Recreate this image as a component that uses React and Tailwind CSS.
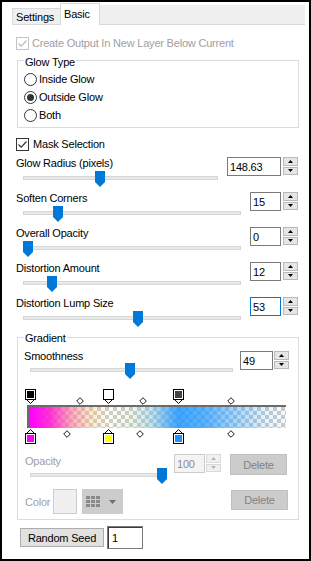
import React from 'react';

const FONT = "font-['Liberation_Sans',Arial,sans-serif] text-[11px] leading-[14px] tracking-[-0.2px]";

function Check({ disabled }) {
  const c = disabled ? '#bcbcbc' : '#333333';
  return (
    <span className={`w-[13px] h-[13px] border bg-white flex items-center justify-center ${disabled ? 'border-[#c4c4c4]' : 'border-[#333333]'}`}>
      <svg width="11" height="11" viewBox="0 0 11 11">
        <path d="M1.5 5.5 L4.2 8.2 L9.5 2.5" fill="none" stroke={c} strokeWidth="1.2" />
      </svg>
    </span>
  );
}

function Radio({ on, label }) {
  return (
    <div className="h-[18px] flex items-center gap-[2px]">
      <span className="w-[13px] h-[13px] rounded-full border border-[#333333] bg-white flex items-center justify-center">
        {on && <span className="w-[7px] h-[7px] rounded-full bg-[#333333]" />}
      </span>
      <span>{label}</span>
    </div>
  );
}

function Arrows({ disabled }) {
  const c = disabled ? '#b4b4b4' : '#000000';
  const box = disabled ? 'border-[#dadada] bg-[#f0f0f0]' : 'border-[#b9b9b9] bg-[#e6e6e6]';
  return (
    <div className="flex flex-col w-[15px] h-[18px] gap-[1px]">
      <div className={`flex-1 border flex items-center justify-center ${box}`}>
        <svg width="5" height="3" viewBox="0 0 5 3"><path d="M0 3 L2.5 0 L5 3 Z" fill={c} /></svg>
      </div>
      <div className={`flex-1 border flex items-center justify-center ${box}`}>
        <svg width="5" height="3" viewBox="0 0 5 3"><path d="M0 0 L5 0 L2.5 3 Z" fill={c} /></svg>
      </div>
    </div>
  );
}

function Spin({ value, w, gap, focus, disabled }) {
  let box = 'border-[#7a7a7a] bg-white';
  if (focus) box = 'border-[#0078d7] bg-white';
  if (disabled) box = 'border-[#cccccc] bg-[#f4f4f4] text-[#8d8d8d]';
  return (
    <div className="flex items-start">
      <div className={`${w} h-[19px] border pl-[2px] flex items-center ${box}`}>{value}</div>
      <div className={gap}><Arrows disabled={disabled} /></div>
    </div>
  );
}

function Slider({ w, left }) {
  return (
    <div className={`relative h-[16px] ${w}`}>
      <div className="absolute left-0 right-0 top-[5px] h-[4px] bg-[#e7eaea] border border-[#d6d6d6]" />
      <svg className={`absolute top-0 ${left}`} width="10" height="16" viewBox="0 0 10 16">
        <path d="M0 0 H10 V11 L5 16 L0 11 Z" fill="#0078d7" />
      </svg>
    </div>
  );
}

function SliderRow({ label, colW, trackW, left, value, inputW, inputMl, gap, focus }) {
  return (
    <div className="flex h-[35px]">
      <div className={colW}>
        <div className="h-[14px] whitespace-nowrap">{label}</div>
        <div className="ml-[7px] mt-[1px]">
          <Slider w={trackW} left={left} />
        </div>
      </div>
      <div className={`${inputMl} mt-[1px]`}>
        <Spin value={value} w={inputW} gap={gap} focus={focus} />
      </div>
    </div>
  );
}

function Stop({ color, down }) {
  return (
    <svg width="11" height="15" viewBox="0 0 11 15">
      {down ? (
        <>
          <path d="M0.5 9.5 L5.5 14.5 L10.5 9.5 Z" fill="#fff" stroke="#000" />
          <rect x="0.5" y="0.5" width="10" height="10" fill="#fff" stroke="#000" />
          <rect x="2" y="2" width="7" height="7" fill={color} />
        </>
      ) : (
        <>
          <path d="M0.5 5.5 L5.5 0.5 L10.5 5.5 Z" fill="#fff" stroke="#000" />
          <rect x="0.5" y="4.5" width="10" height="10" fill="#fff" stroke="#000" />
          <rect x="2" y="6" width="7" height="7" fill={color} />
        </>
      )}
    </svg>
  );
}

function Diamond() {
  return (
    <svg width="8" height="8" viewBox="0 0 8 8">
      <path d="M4 0.7 L7.3 4 L4 7.3 L0.7 4 Z" fill="#fff" stroke="#000" strokeWidth="0.9" />
    </svg>
  );
}

function GradientEditor() {
  return (
    <div className="w-[265px]">
      <div className="relative h-[16px]">
        <div className="absolute top-0 left-[1px]"><Stop color="#000000" down /></div>
        <div className="absolute top-0 left-[79px]"><Stop color="#ffffff" down /></div>
        <div className="absolute top-0 left-[149px]"><Stop color="#444444" down /></div>
        <div className="absolute top-[8px] left-[52px]"><Diamond /></div>
        <div className="absolute top-[8px] left-[115px]"><Diamond /></div>
        <div className="absolute top-[8px] left-[203px]"><Diamond /></div>
      </div>
      <div className="ml-[3px] w-[259px] h-[23px] border-t-2 border-l-2 border-[#6b6b6b] bg-[repeating-conic-gradient(#cbcbcb_0_25%,#ffffff_0_50%)] bg-[length:8px_8px]">
        <div className="w-full h-full bg-[linear-gradient(to_right,rgba(255,0,255,1)_0%,rgba(255,30,210,0.9)_8%,rgba(255,120,150,0.6)_17%,rgba(255,190,110,0.35)_24%,rgba(255,240,90,0.05)_31%,rgba(170,215,150,0.2)_40%,rgba(110,190,220,0.45)_48%,rgba(30,150,255,0.85)_58%,rgba(35,155,255,0.75)_68%,rgba(50,165,255,0.45)_80%,rgba(70,175,255,0.15)_92%,rgba(90,185,255,0.03)_100%)]" />
      </div>
      <div className="relative h-[17px]">
        <div className="absolute top-[1px] left-[1px]"><Stop color="#ff00ff" /></div>
        <div className="absolute top-[1px] left-[79px]"><Stop color="#ffff00" /></div>
        <div className="absolute top-[1px] left-[149px]"><Stop color="#1e90ff" /></div>
        <div className="absolute top-[2px] left-[39px]"><Diamond /></div>
        <div className="absolute top-[2px] left-[112px]"><Diamond /></div>
        <div className="absolute top-[2px] left-[203px]"><Diamond /></div>
      </div>
    </div>
  );
}

function PaletteIcon() {
  const cells = [];
  for (let r = 0; r < 3; r++) {
    for (let c = 0; c < 3; c++) {
      cells.push(<rect key={`${r}-${c}`} x={c * 5} y={r * 4} width="4" height="3" fill="#8a8a8a" />);
    }
  }
  return <svg width="14" height="11" viewBox="0 0 14 11">{cells}</svg>;
}

export default function App() {
  return (
    <div className={`w-[311px] h-[561px] border-2 border-black bg-white text-black ${FONT}`}>
      {/* tabs */}
      <div className="flex items-end h-[23px] pl-[10px]">
        <div className="w-[49px] h-[17px] bg-[#f0f0f0] border border-[#d9d9d9] pl-[3px] flex items-center">Settings</div>
        <div className="w-[40px] h-[22px] -ml-px bg-white border border-b-0 border-[#d9d9d9] pl-[3px] pt-[3px]">Basic</div>
        <div className="flex-1 h-[20px] mr-[4px] bg-[#f0f0f0] border-b border-[#d9d9d9]" />
      </div>

      <div className="pl-[14px]">
        <div className="mt-[11px] h-[14px] flex items-center gap-[3px] text-[#a0a0a0]">
          <Check disabled />
          <span>Create Output In New Layer Below Current</span>
        </div>

        <div className="mt-[10px] ml-[1px] w-[282px] border border-[#dcdcdc] pb-[3px]">
          <div className="-mt-[6px] ml-[6px] w-fit px-[1px] bg-white h-[14px]">Glow Type</div>
          <div className="pl-[6px] mt-[1px]">
            <Radio label="Inside Glow" />
            <Radio on label="Outside Glow" />
            <Radio label="Both" />
          </div>
        </div>

        <div className="mt-[9px] h-[14px] flex items-center gap-[4px]">
          <Check />
          <span>Mask Selection</span>
        </div>

        <div className="mt-[5px]">
          <SliderRow label="Glow Radius (pixels)" colW="w-[202px]" trackW="w-[195px]" left="left-[72px]" value="148.63" inputW="w-[54px]" inputMl="ml-[9px]" gap="ml-[2px]" />
          <SliderRow label="Soften Corners" colW="w-[225px]" trackW="w-[218px]" left="left-[30px]" value="15" inputW="w-[31px]" inputMl="ml-[9px]" gap="ml-[2px]" />
          <SliderRow label="Overall Opacity" colW="w-[225px]" trackW="w-[218px]" left="left-0" value="0" inputW="w-[31px]" inputMl="ml-[9px]" gap="ml-[2px]" />
          <SliderRow label="Distortion Amount" colW="w-[225px]" trackW="w-[218px]" left="left-[24px]" value="12" inputW="w-[31px]" inputMl="ml-[9px]" gap="ml-[2px]" />
          <SliderRow label="Distortion Lump Size" colW="w-[225px]" trackW="w-[218px]" left="left-[110px]" value="53" inputW="w-[31px]" inputMl="ml-[9px]" gap="ml-[2px]" focus />
        </div>

        <div className="mt-[6px] ml-[1px] w-[282px] border border-[#dcdcdc] pb-[5px]">
          <div className="-mt-[7px] ml-[6px] w-fit px-[1px] bg-white h-[14px]">Gradient</div>
          <div className="pl-[6px] mt-[4px]">
            <div className="flex h-[40px]">
              <div className="w-[209px]">
                <div className="h-[14px]">Smoothness</div>
                <div className="ml-[6px]">
                  <Slider w="w-[203px]" left="left-[95px]" />
                </div>
              </div>
              <div className="ml-[7px] mt-[2px]">
                <Spin value="49" w="w-[33px]" gap="ml-[1px]" />
              </div>
            </div>

            <GradientEditor />

            <div className="mt-[9px] flex h-[35px]">
              <div className="w-[143px] pl-[1px]">
                <div className="h-[14px] text-[#a0a0a0]">Opacity</div>
                <div className="ml-[5px]">
                  <Slider w="w-[137px]" left="left-[127px]" />
                </div>
              </div>
              <div className="ml-[7px]">
                <Spin value="100" w="w-[31px]" gap="ml-[1px]" disabled />
              </div>
              <div className="ml-[9px] w-[57px] h-[21px] bg-[#cccccc] border border-[#bfbfbf] text-[#838383] flex items-center justify-center">Delete</div>
            </div>

            <div className="flex items-start h-[25px]">
              <div className="w-[29px] pl-[1px] h-[25px] flex items-center text-[#a0a0a0]">Color</div>
              <div className="w-[24px] h-[25px] bg-[#f0f0f0] border border-[#cccccc]" />
              <div className="ml-[5px] w-[41px] h-[25px] bg-[#cccccc] flex items-center pl-[4px] gap-[9px]">
                <PaletteIcon />
                <svg width="7" height="4" viewBox="0 0 7 4"><path d="M0 0 H7 L3.5 4 Z" fill="#6f6f6f" /></svg>
              </div>
              <div className="ml-[108px] mt-[1px] w-[57px] h-[20px] bg-[#cccccc] border border-[#bfbfbf] text-[#838383] flex items-center justify-center">Delete</div>
            </div>
          </div>
        </div>

        <div className="mt-[6px] flex items-center h-[23px]">
          <div className="ml-[4px] w-[84px] h-[19px] bg-[#e1e1e1] border border-[#adadad] flex items-center justify-center">Random Seed</div>
          <div className="ml-[3px] w-[36px] h-[23px] border border-[#7a7a7a] shadow-[inset_1px_1px_0_#3c3c3c] pl-[4px] flex items-center">1</div>
        </div>
      </div>
    </div>
  );
}
